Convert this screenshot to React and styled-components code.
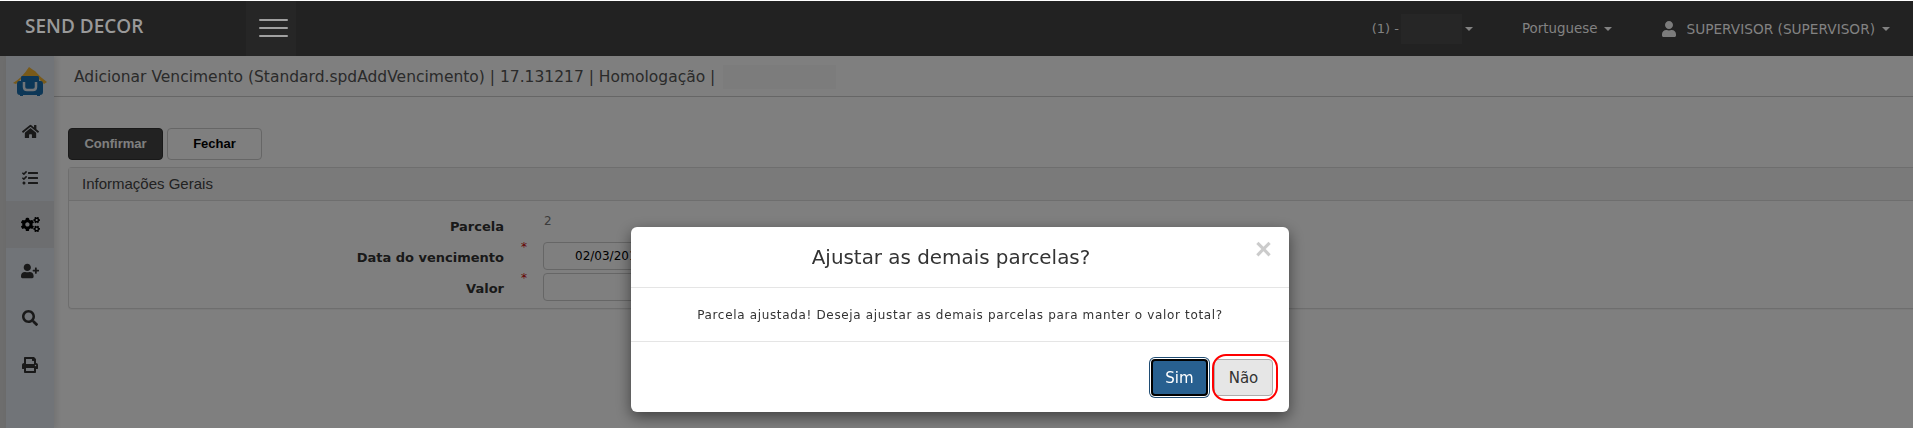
import React from "react";
import styled, { createGlobalStyle } from "styled-components";
import { FaHome, FaTasks, FaCogs, FaUserPlus, FaSearch, FaPrint, FaUser } from "react-icons/fa";

const Global = createGlobalStyle`
  html, body { margin: 0; padding: 0; height: 100%; overflow: hidden; background: #fff; }
  * { box-sizing: border-box; }
  #root { height: 100%; }
`;
const Page = styled.div`
  height: 428px; display: flex; flex-direction: column; padding-top: 1px; overflow: hidden;
  font-family: "DejaVu Sans", sans-serif; color: #333;
`;
const Header = styled.header`
  height: 55px; flex: none; display: flex; align-items: center; background: #222; position: relative; z-index: 2;
`;
const Brand = styled.div`
  width: 246px; padding: 0 0 5px 25px; font: 600 19px "Open Sans", sans-serif; color: #999;
`;
const BurgerWrap = styled.div`
  width: 50px; height: 100%; display: flex; flex-direction: column; justify-content: center; gap: 6px; padding: 0 0 2px 13px; background: #262626;
`;
const BurgerLine = styled.span`
  display: block; height: 2px; width: 29px; background: #a0a0a0; border-radius: 1px;
`;
const TopRight = styled.nav`
  margin-left: auto; display: flex; align-items: center; color: #828282; padding-right: 23px;
`;
const TopItem = styled.div`
  display: flex; align-items: center; font-size: ${p => p.$size}px; margin-left: ${p => p.$ml}px;
`;
const Caret = styled.span`
  display: inline-block; margin-left: ${p => p.$ml}px; border-left: 4px solid transparent; border-right: 4px solid transparent; border-top: 4px solid #828282;
`;
const Blur = styled.span`
  display: inline-block; width: 61px; height: 30px; background: #262626; margin-left: 2px;
`;
const Avatar = styled.span`
  display: inline-flex; margin-right: 9px; font-size: 16px; color: #7c7c7c;
`;
const Body = styled.div`flex: 1; display: flex; min-height: 0;`;
const SideEdge = styled.div`width: 6px; background: #dadada;`;
const Sidebar = styled.aside`
  width: 48px; flex: none; background: #e3e8f0; display: flex; flex-direction: column; align-items: center;
  box-shadow: 3px 0 6px rgba(0,0,0,.1); position: relative; z-index: 1;
`;
const Logo = styled.div`height: 52px; width: 100%; display: flex; align-items: center; justify-content: center;`;
const NavItem = styled.div`
  height: 46.7px; width: 100%; display: flex; align-items: center; justify-content: center; font-size: ${p => p.$size || 17}px;
  color: ${p => p.$active ? "#000" : "#333"};
  background: ${p => p.$active ? "#dadce0" : "transparent"};
`;
const Main = styled.main`flex: 1; min-width: 0; background: #fff;`;
const TitleBar = styled.div`
  height: 41px; padding: 1px 0 0 20px; display: flex; align-items: center; font-size: 15.5px; color: #555; border-bottom: 1px solid #ccc;
`;
const BlurLight = styled.span`display: inline-block; width: 113px; height: 24px; background: #f8f8f8; margin-left: 8px;`;
const Content = styled.div`padding: 31px 0 0 14px;`;
const ButtonRow = styled.div`display: flex; gap: 4px; margin-bottom: 7px;`;
const Btn = styled.button`
  width: 95px; height: 32px; border-radius: 4px; font: bold 13px "Liberation Sans", sans-serif; padding: 0 0 2px;
  background: ${p => p.$dark ? "#444" : "#fff"}; color: ${p => p.$dark ? "#fff" : "#000"};
  border: 1px solid ${p => p.$dark ? "#333" : "#ccc"};
`;
const Panel = styled.section`border: 1px solid #ddd; border-right: 0; border-radius: 4px 0 0 4px; height: 142px;
  box-shadow: 0 1px 1px rgba(0,0,0,.05);`;
const PanelHead = styled.div`
  height: 33px; padding: 0 0 2px 13px; display: flex; align-items: center; font: 15px "Liberation Sans", sans-serif; color: #444; background: #f5f5f5; border-bottom: 1px solid #ddd;
`;
const Form = styled.div`
  padding-top: 9px; display: grid; grid-template-columns: 435px 39px 1fr; grid-auto-rows: 31px;
`;
const Label = styled.div`text-align: right; font-weight: bold; color: #333; font-size: 13px; line-height: 33px;`;
const Star = styled.div`color: #c00; font-size: 12px; line-height: 10px; padding: 1px 0 0 17px;`;
const StaticVal = styled.div`padding-left: 1px; color: #777; font-size: 12px; line-height: 22px;`;
const Input = styled.div`
  width: 260px; height: 28px; margin-top: 1px; border: 1px solid #ccc; border-radius: 4px; background: #fff; font-size: 12px; color: #000; display: flex; align-items: center; padding-left: 31px;
`;
const Overlay = styled.div`position: fixed; inset: 1px 0 0 0; background: rgba(0,0,0,.5); z-index: 1;`;
const Modal = styled.div`
  position: fixed; left: 631px; top: 227px; width: 658px; height: 185px; background: #fff; border-radius: 6px; box-shadow: 0 5px 15px rgba(0,0,0,.5);
  display: flex; flex-direction: column; z-index: 3;
`;
const ModalHead = styled.div`
  height: 61px; flex: none; position: relative; display: flex; align-items: center; justify-content: center; padding-right: 18px; font-size: 19.9px; color: #333; border-bottom: 1px solid #e5e5e5;
`;
const Close = styled.span`
  position: absolute; right: 17px; top: 6px; font: bold 29px "Liberation Sans", sans-serif; color: #000; opacity: .2;
`;
const ModalBody = styled.div`
  height: 54px; flex: none; display: flex; align-items: center; justify-content: center; font-size: 12px; letter-spacing: .66px; color: #333; border-bottom: 1px solid #e5e5e5;
`;
const ModalFoot = styled.div`
  flex: 1; display: flex; justify-content: flex-end; gap: 6px; padding: 17px 16px 0 0;
`;
const ModalBtn = styled.button`
  position: relative; height: 37px; width: ${p => p.$w}px; padding: 0; border-radius: 4px; font: 15px "DejaVu Sans", sans-serif;
  background: ${p => p.$primary ? "#286090" : "#e6e6e6"}; color: ${p => p.$primary ? "#fff" : "#333"};
  border: ${p => p.$primary ? "2px solid #000" : "1px solid #adadad"};
  ${p => p.$primary && "box-shadow: 0 0 0 1px #fff, 0 0 0 2px #204d74;"}
`;
const RedRing = styled.span`
  position: absolute; left: -3px; top: -6px; width: 66px; height: 47px; border: 2px solid #f00; border-radius: 14px;
`;

export default function App() {
  return (
    <Page>
      <Global />
      <Header>
        <Brand>SEND DECOR</Brand>
        <BurgerWrap><BurgerLine /><BurgerLine /><BurgerLine /></BurgerWrap>
        <TopRight>
          <TopItem $size={13}>(1) -<Blur /><Caret $ml={3} /></TopItem>
          <TopItem $size={13.4} $ml={49}>Portuguese<Caret $ml={7} /></TopItem>
          <TopItem $size={13.7} $ml={49}><Avatar><FaUser /></Avatar>SUPERVISOR (SUPERVISOR)<Caret $ml={7} /></TopItem>
        </TopRight>
      </Header>
      <Body>
        <SideEdge />
        <Sidebar>
          <Logo>
            <svg width="34" height="30" viewBox="0 0 34 30">
              <path d="M0 16 Q9 11 16 0 Q20 3 22 4 Q27 10 34 15 L31 17 L25 11 H9 L3 17 Z" fill="#f2b433" />
              <path d="M9 9 h16 q1 0 1 2 v3 h2 q2 0 2 3 v8 q0 3 -3 3 v1 h-3 v-1 h-14 v1 h-3 v-1 q-3 0 -3 -3 v-8 q0 -3 2 -3 h2 v-3 q0 -2 1 -2Z" fill="#1b6fae" />
              <path d="M11 15 v5 q0 3 3 3 h6 q3 0 3 -3 v-5" fill="none" stroke="#e3e8f0" strokeWidth="2.5" />
            </svg>
          </Logo>
          <NavItem><FaHome /></NavItem>
          <NavItem $size={16}><FaTasks /></NavItem>
          <NavItem $active $size={19}><FaCogs /></NavItem>
          <NavItem $size={18}><FaUserPlus /></NavItem>
          <NavItem $size={16}><FaSearch /></NavItem>
          <NavItem $size={16}><FaPrint /></NavItem>
        </Sidebar>
        <Main>
          <TitleBar>Adicionar Vencimento (Standard.spdAddVencimento) | 17.131217 | Homologação |<BlurLight /></TitleBar>
          <Content>
            <ButtonRow><Btn $dark>Confirmar</Btn><Btn>Fechar</Btn></ButtonRow>
            <Panel>
              <PanelHead>Informações Gerais</PanelHead>
              <Form>
                <Label>Parcela</Label><span /><StaticVal>2</StaticVal>
                <Label>Data do vencimento</Label><Star>*</Star><Input>02/03/2017</Input>
                <Label>Valor</Label><Star>*</Star><Input />
              </Form>
            </Panel>
          </Content>
        </Main>
      </Body>
      <Overlay />
      <Modal>
        <ModalHead>Ajustar as demais parcelas?<Close>×</Close></ModalHead>
        <ModalBody>Parcela ajustada! Deseja ajustar as demais parcelas para manter o valor total?</ModalBody>
        <ModalFoot>
          <ModalBtn $primary $w={57}>Sim</ModalBtn>
          <ModalBtn $w={59}>Não<RedRing /></ModalBtn>
        </ModalFoot>
      </Modal>
    </Page>
  );
}
